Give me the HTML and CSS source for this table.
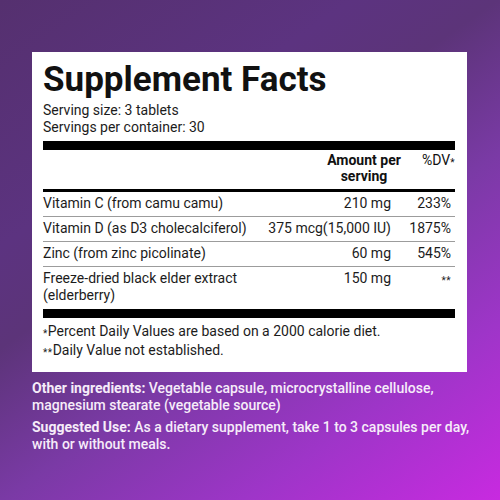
FILE: index.html
```
<!DOCTYPE html>
<html>
<head>
<meta charset="utf-8">
<link rel="stylesheet" href="styles.css">
</head>
<body>
<div class="page">
  <div class="card">
    <h1 class="title">Supplement Facts</h1>
    <div class="serving">
      <div>Serving size: 3 tablets</div>
      <div>Servings per container: 30</div>
    </div>
    <div class="bar thick"></div>
    <div class="head">
      <div class="name"></div>
      <div class="amt-h">Amount per<br>serving</div>
      <div class="dv-h">%DV<span class="ast">*</span></div>
    </div>
    <div class="bar medium"></div>
    <div class="row">
      <div class="name">Vitamin C (from camu camu)</div>
      <div class="amt">210 mg</div>
      <div class="dv">233%</div>
    </div>
    <div class="row">
      <div class="name">Vitamin D (as D3 cholecalciferol)</div>
      <div class="amt">375 mcg(15,000 IU)</div>
      <div class="dv">1875%</div>
    </div>
    <div class="row">
      <div class="name">Zinc (from zinc picolinate)</div>
      <div class="amt">60 mg</div>
      <div class="dv">545%</div>
    </div>
    <div class="row last">
      <div class="name">Freeze-dried black elder extract<br>(elderberry)</div>
      <div class="amt">150 mg</div>
      <div class="dv"><span class="ast">**</span></div>
    </div>
    <div class="bar thick bottom"></div>
    <div class="notes">
      <div><span class="ast">*</span>Percent Daily Values are based on a 2000 calorie diet.</div>
      <div><span class="ast">**</span>Daily Value not established.</div>
    </div>
  </div>
  <div class="info">
    <p><b>Other ingredients:</b> Vegetable capsule, microcrystalline cellulose, magnesium stearate (vegetable source)</p>
    <p><b>Suggested Use:</b> As a dietary supplement, take 1 to 3 capsules per day, with or without meals.</p>
  </div>
</div>
</body>
</html>
```
FILE: styles.css
```
html, body {
  margin: 0;
  padding: 0;
}
body {
  width: 500px;
  height: 500px;
  overflow: hidden;
  font-family: Roboto, "Liberation Sans", sans-serif;
}
.page {
  width: 500px;
  height: 500px;
  padding-top: 52px;
  box-sizing: border-box;
  background: linear-gradient(145deg, #55306f 0%, #5c3380 29%, #5c3479 41%, #7a3aa5 59%, #9e35c8 79%, #c82ae0 100%);
}
.card {
  margin-left: 32px;
  width: 435px;
  height: 320px;
  box-sizing: border-box;
  padding: 8px 12px 0 11px;
  background: #fff;
  color: #1c1c1c;
}
.title {
  margin: 0;
  font-size: 35px;
  line-height: 40px;
  font-weight: 700;
  color: #111;
}
.serving {
  margin-top: 2px;
  font-size: 14px;
  line-height: 17px;
}
.bar {
  background: #000;
}
.thick {
  margin-top: 5px;
  height: 9px;
}
.thick.bottom {
  margin-top: 1px;
}
.medium {
  height: 3px;
}
.head {
  display: flex;
  padding: 2px 0 5px;
  font-size: 14px;
  line-height: 16px;
  font-weight: 700;
  color: #111;
}
.name {
  flex: 1 1 auto;
}
.amt-h {
  width: 76px;
  text-align: center;
}
.dv-h {
  width: 53px;
  text-align: right;
  font-weight: 400;
}
.row {
  display: flex;
  padding: 3px 0 4px;
  font-size: 14px;
  line-height: 17px;
  border-bottom: 1px solid #9c9c9c;
}
.row.last {
  border-bottom: none;
}
.amt {
  flex: 0 0 auto;
  min-width: 76px;
  box-sizing: border-box;
  padding-right: 11px;
  text-align: right;
  white-space: nowrap;
}
.dv {
  flex: 0 0 53px;
  box-sizing: border-box;
  padding-right: 4px;
  text-align: right;
}
.ast {
  font-size: 10px;
  vertical-align: -1px;
  letter-spacing: 0.5px;
}
.notes {
  margin-top: 5px;
  font-size: 14px;
  line-height: 17px;
}
.info {
  margin: 8px 0 0 32px;
  width: 445px;
  color: #f6ecf9;
  font-size: 14px;
  line-height: 16.5px;
  font-weight: 500;
}
.info p {
  margin: 0 0 6px;
}
.info b {
  font-weight: 700;
}
```
